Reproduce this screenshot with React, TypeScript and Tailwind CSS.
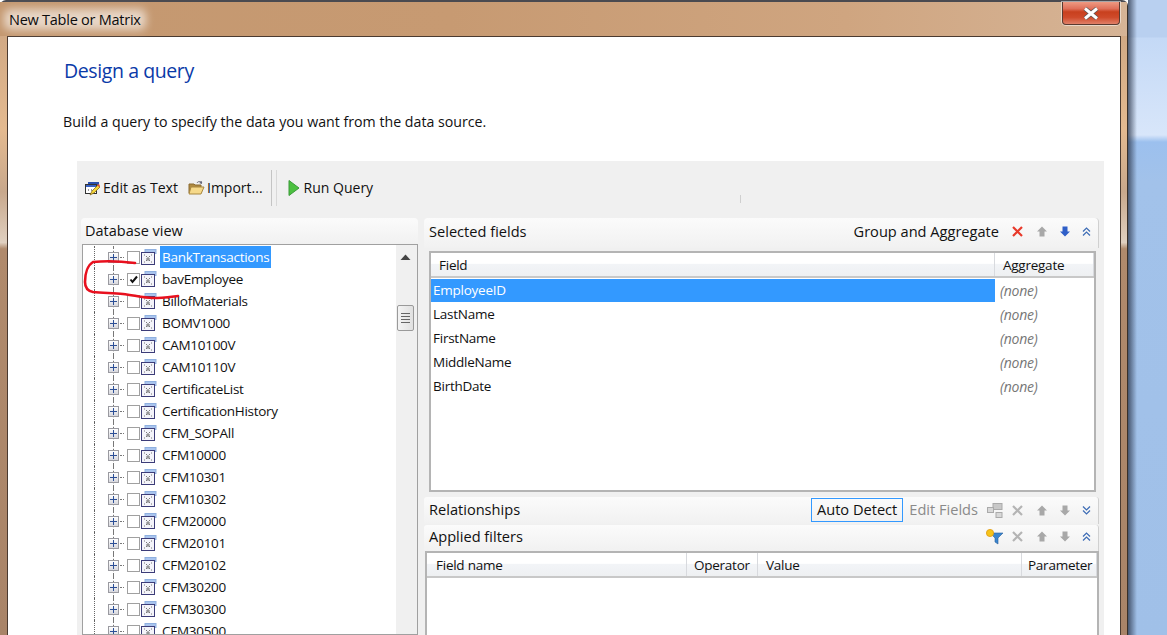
import React from "react";

const names = ["BankTransactions","bavEmployee","BillofMaterials","BOMV1000","CAM10100V","CAM10110V","CertificateList","CertificationHistory","CFM_SOPAll","CFM10000","CFM10301","CFM10302","CFM20000","CFM20101","CFM20102","CFM30200","CFM30300","CFM30500"];
const fields = ["EmployeeID","LastName","FirstName","MiddleName","BirthDate"];

function TableIcon() {
  return (
    <svg width="16" height="16" viewBox="0 0 16 16" className="shrink-0">
      <rect x="4" y="0.5" width="11" height="4" fill="#a9c4ee" stroke="#8fb0e0" />
      <rect x="0.5" y="3.5" width="13" height="12" fill="#f4f4fa" stroke="#3c3c78" />
      <path d="M3 6h1M5 7l1 1M9 7l-1 1M10 6h1M3 13h1M5 12l1-1M9 12l-1-1M10 13h1M6 9h2v2H6z" stroke="#777" strokeWidth="1" fill="none" />
    </svg>
  );
}

function Plus() {
  return (
    <div className="relative z-10 flex h-[11px] w-[11px] items-center justify-center border border-[#9a9aa0] bg-[linear-gradient(#ffffff,#d8d8de)]">
      <svg width="9" height="9" viewBox="0 0 9 9"><path d="M1 4.5h7M4.5 1v7" stroke="#2c4f96" strokeWidth="1" /></svg>
    </div>
  );
}

function TreeRow({ name, i }: { name: string; i: number }) {
  return (
    <div className="flex h-[22px] items-center">
      <div className="h-full w-[12px] shrink-0 border-r border-dotted border-[#666]" />
      <div className="relative flex h-full w-[13px] shrink-0" />
      <div className="relative flex h-full w-[11px] shrink-0 items-center">
        <div className="absolute left-[5px] top-0 h-full border-l border-dashed border-[#777]" />
        <Plus />
      </div>
      <div className="ml-[1px] mr-[3px] w-[4px] shrink-0 border-t border-dotted border-[#777]" />
      <div className="flex h-[13px] w-[13px] shrink-0 items-center justify-center border border-[#a0a0a0] bg-white">
        {i === 1 && (
          <svg width="11" height="11" viewBox="0 0 11 11"><path d="M2.5 5.5l2 2.5 4.5-5.5" stroke="#111" strokeWidth="2" fill="none" /></svg>
        )}
      </div>
      <div className="ml-[1px]"><TableIcon /></div>
      <div className={"ml-[3px] flex h-[22px] items-center px-[2px] text-[13.5px] tracking-[-0.28px] " + (i === 0 ? "bg-[#3399ff] text-white" : "text-[#111]")}>{name}</div>
    </div>
  );
}

function Arrow({ dir, color }: { dir: "up" | "down"; color: string }) {
  return (
    <svg width="10" height="11" viewBox="0 0 10 11" className={dir === "down" ? "rotate-180" : ""}>
      <path d="M5 0.5L10 5.5H7.5V10.5H2.5V5.5H0z" fill={color} />
    </svg>
  );
}
function Cross({ color }: { color: string }) {
  return (
    <svg width="11" height="11" viewBox="0 0 11 11"><path d="M1 1l9 9M10 1l-9 9" stroke={color} strokeWidth="2.2" /></svg>
  );
}
function Chevrons({ up }: { up: boolean }) {
  return (
    <svg width="9" height="9" viewBox="0 0 9 9" className={up ? "" : "rotate-180"}>
      <path d="M1 4.5l3.5-3.5 3.5 3.5M1 8.5L4.5 5 8 8.5" stroke="#3d6cb5" strokeWidth="1.2" fill="none" />
    </svg>
  );
}
function ArrowSet({ up, down, chevUp, cross }: { up: string; down: string; chevUp: boolean; cross: string }) {
  return (
    <div className="flex items-center">
      <div className="flex w-[13px] justify-center"><Cross color={cross} /></div>
      <div className="ml-[11px] flex w-[13px] justify-center"><Arrow dir="up" color={up} /></div>
      <div className="ml-[10px] flex w-[13px] justify-center"><Arrow dir="down" color={down} /></div>
      <div className="ml-[9px] flex w-[13px] justify-center"><Chevrons up={chevUp} /></div>
    </div>
  );
}

const headerBg = "bg-[linear-gradient(#fbfbfb,#f1f1f1)]";
const colHead = "flex h-full items-center pt-[1px] bg-[linear-gradient(#ffffff_45%,#f2f4f7_50%,#eef0f2)] border-r border-[#d8dade] text-[13.5px] tracking-[-0.25px]";

export default function App() {
  return (
    <div className="flex h-[635px] w-[1167px] overflow-hidden font-['Open_Sans','Noto_Sans',sans-serif] text-[14px] text-[#111]">
      <div className="flex h-full w-[1128px] shrink-0 flex-col rounded-t-[6px] border-r border-t-2 border-[#3a3028] border-t-[#4a4a50] bg-[linear-gradient(#c69a72,#d2aa85_6%,#e4ba90_20%,#c8a88c_30%,#e0d0c0_38%,#b08a6c_39%,#a98468)]">
        {/* title bar */}
        <div className="flex h-[34px] shrink-0 items-start justify-between bg-[linear-gradient(90deg,#c49870,#c79a72_40%,#cfa580_75%,#d6b496)] pr-[7px]">
          <div className="relative ml-[9px] mt-[8px] flex h-[19px] items-center text-[14.5px] tracking-[-0.25px] text-[#0c0c0c]">
            <div className="absolute -inset-x-[5px] -inset-y-[1px] rounded-[6px] bg-white/60 blur-[4px]" />
            <span className="relative">New Table or Matrix</span>
          </div>
          <div className="flex h-[23px] w-[58px] items-center justify-center rounded-b-[4px] border border-t-0 border-[#5a3a30] bg-[linear-gradient(#ee9a82,#e0705a_30%,#c8401e_45%,#cf4a2a_70%,#e08068)] shadow-[0_0_0_1px_rgba(255,255,255,0.5)]">
            <svg width="16" height="13" viewBox="0 0 16 13"><path d="M2 1.5l12 10M14 1.5l-12 10" stroke="#555" strokeWidth="4.4" /><path d="M2 1.5l12 10M14 1.5l-12 10" stroke="#fff" strokeWidth="3" /></svg>
          </div>
        </div>
        {/* white client */}
        <div className="mx-[6px] ml-[7px] flex min-h-0 flex-1 flex-col border-l border-t border-r border-[#4a3a30] bg-white">
          <h1 className="ml-[56px] mt-[20px] text-[19.5px] font-normal leading-[28px] tracking-[-0.4px] text-[#0a3aa8]">Design a query</h1>
          <p className="ml-[55px] mt-[27px] text-[14.2px] leading-[20px]">Build a query to specify the data you want from the data source.</p>
          {/* gray panel */}
          <div className="ml-[69px] mr-[16px] mt-[29px] flex min-h-0 flex-1 flex-col bg-[#f0f0f0] pl-[4px] pr-[5px]">
            {/* toolbar */}
            <div className="flex h-[54px] shrink-0 items-center pl-[4px]">
              <svg width="16" height="16" viewBox="0 0 16 16" className="mt-[1px]">
                <rect x="3" y="1" width="11" height="3" fill="#2a4fae" />
                <rect x="0.5" y="3.5" width="11" height="9" fill="#fff" stroke="#333" />
                <rect x="1" y="4" width="10" height="2" fill="#3a62c4" />
                <path d="M3 9h1M6 9h1" stroke="#333" />
                <path d="M5 14l2-4 6-6 2 2-6 6z" fill="#f4d73a" stroke="#7a5a10" strokeWidth="0.7" />
                <path d="M12 4l2-1 1 2-1 1z" fill="#e0503a" />
              </svg>
              <span className="ml-[2px] pb-[1px] text-[14.1px]">Edit as Text</span>
              <svg width="17" height="15" viewBox="0 0 17 15" className="ml-[10px] -mt-[2px]">
                <path d="M1 4h5l1 1h6v8H1z" fill="#b08a40" stroke="#8a6a30" />
                <path d="M3 7h13l-3 7H1z" fill="#f6d98a" stroke="#a98840" />
                <path d="M9 3c1-2 4-2 5 0" stroke="#667" fill="none" />
                <path d="M14 1l0 3-3-1z" fill="#667" />
              </svg>
              <span className="ml-[2px] pb-[1px]">Import...</span>
              <div className="ml-[8px] flex h-[36px] gap-[4px]">
                <div className="w-[1px] bg-[#c4c4c4]" />
                <div className="w-[1px] bg-[#d8d8d8]" />
              </div>
              <svg width="12" height="16" viewBox="0 0 12 16" className="ml-[11px] -mt-[1px]">
                <path d="M1 0.5L11 8 1 15.5z" fill="#4cc040" stroke="#3a9a38" />
              </svg>
              <span className="ml-[4px] pb-[1px]">Run Query</span>
              <div className="ml-[367px] mt-[22px] h-[8px] w-[1px] bg-[#cfcfcf]" />
            </div>
            {/* columns */}
            <div className="mt-[3px] flex min-h-0 flex-1 gap-[6px]">
              {/* left column */}
              <div className="flex w-[337px] shrink-0 flex-col">
                <div className={"flex h-[26px] shrink-0 items-center rounded-t-[4px] pl-[4px] text-[14.5px] " + headerBg}>Database view</div>
                <div className="relative ml-[1px] flex min-h-0 flex-1 overflow-hidden border border-[#a0a0a0] bg-white">
                  <div className="min-w-0 flex-1 pt-[1px]">
                    {names.map((n, i) => <TreeRow key={n} name={n} i={i} />)}
                  </div>
                  {/* scrollbar */}
                  <div className="flex w-[21px] shrink-0 flex-col items-center bg-[#f0f0f0] pr-[3px]">
                    <svg width="11" height="6" viewBox="0 0 11 6" className="mt-[9px]"><path d="M0.5 6L5.5 0.5 10.5 6z" fill="#444" /></svg>
                    <div className="mt-[45px] flex h-[26px] w-[17px] shrink-0 flex-col items-center justify-center gap-[2px] rounded-[2px] border border-[#9a9a9a] bg-[linear-gradient(90deg,#f4f4f4,#e0e0e0)]">
                      <div className="h-[1px] w-[9px] bg-[#666]" />
                      <div className="h-[1px] w-[9px] bg-[#666]" />
                      <div className="h-[1px] w-[9px] bg-[#666]" />
                      <div className="h-[1px] w-[9px] bg-[#666]" />
                    </div>
                  </div>
                  {/* hand-drawn annotation */}
                  <svg width="110" height="50" viewBox="0 0 110 50" className="pointer-events-none absolute left-[0px] top-[14px] z-20">
                    <path d="M52 4C36 2 20 2 10 3 5 6 2 14 2 23c0 6 3 9 8 10 10 1 20 1 30 2 10 1 20 4 30 4 9 0 16-1 25-2" stroke="#e8101e" strokeWidth="2.6" fill="none" strokeLinecap="round" />
                  </svg>
                </div>
              </div>
              {/* right column */}
              <div className="flex min-w-0 flex-1 flex-col">
                <div className={"flex h-[30px] shrink-0 items-center justify-between rounded-t-[4px] border-r border-[#d0d0d0] pb-[3px] pl-[5px] pr-[5px] text-[14.6px] " + headerBg}>
                  <span>Selected fields</span>
                  <div className="flex items-center">
                    <span className="mr-[12px]">Group and Aggregate</span>
                    <ArrowSet cross="#e8392a" up="#a8a8a8" down="#2f5fc8" chevUp={true} />
                  </div>
                </div>
                <div className="mx-[5px] mt-[3px] mr-[3px] flex h-[241px] shrink-0 flex-col border-2 border-[#b4b4b4] bg-white">
                  <div className="flex h-[25px] shrink-0 border-b-2 border-[#c8c8c8]">
                    <div className={colHead + " w-[564px] pl-[8px]"}>Field</div>
                    <div className={colHead + " flex-1 pl-[8px]"}>Aggregate</div>
                  </div>
                  {fields.map((f, i) => (
                    <div key={f} className="flex h-[24px] shrink-0 items-center pt-[1px] text-[13.5px] tracking-[-0.25px]">
                      <div className={"flex h-full w-[564px] items-center pl-[2px] " + (i === 0 ? "bg-[#3399ff] text-white" : "")}>{f}</div>
                      <div className="pl-[5px] text-[14px] italic text-[#777]">(none)</div>
                    </div>
                  ))}
                </div>
                <div className={"mt-[5px] flex h-[27px] shrink-0 items-center justify-between rounded-t-[3px] border-r border-[#d0d0d0] pb-[1px] pl-[5px] pr-[5px] text-[14.6px] " + headerBg}>
                  <span>Relationships</span>
                  <div className="flex items-center">
                    <div className="mr-[6px] flex h-[24px] items-center border border-[#3399ff] px-[5px]">Auto Detect</div>
                    <span className="text-[#8a8a8a]">Edit Fields</span>
                    <svg width="16" height="15" viewBox="0 0 16 15" className="ml-[9px] mr-[8px]">
                      <rect x="6" y="0.5" width="9" height="6" fill="#c8c8c8" stroke="#aaa" />
                      <rect x="0.5" y="4.5" width="6" height="5" fill="#d8d8d8" stroke="#aaa" />
                      <rect x="9" y="9.5" width="6" height="5" fill="#d8d8d8" stroke="#aaa" />
                    </svg>
                    <ArrowSet cross="#b4b4b4" up="#a8a8a8" down="#a8a8a8" chevUp={false} />
                  </div>
                </div>
                <div className={"mt-[1px] flex h-[26px] shrink-0 items-center justify-between rounded-t-[3px] border-r border-[#d0d0d0] pb-[3px] pl-[5px] pr-[5px] text-[14.6px] " + headerBg}>
                  <span>Applied filters</span>
                  <div className="flex items-center">
                    <svg width="17" height="16" viewBox="0 0 17 16" className="mr-[8px]">
                      <path d="M4 4h13l-5 5v6l-3-2V9z" fill="#3a86d0" stroke="#2a5f9a" strokeWidth="0.6" />
                      <circle cx="4" cy="4" r="3.6" fill="#f6c41a" stroke="#e09a10" strokeWidth="0.8" />
                    </svg>
                    <ArrowSet cross="#b4b4b4" up="#a8a8a8" down="#a8a8a8" chevUp={true} />
                  </div>
                </div>
                <div className="ml-[1px] flex min-h-0 flex-1 flex-col border-2 border-b-0 border-[#b4b4b4] bg-white">
                  <div className="flex h-[25px] shrink-0 border-b-2 border-[#c8c8c8]">
                    <div className={colHead + " w-[260px] pl-[9px]"}>Field name</div>
                    <div className={colHead + " w-[71px] pl-[7px]"}>Operator</div>
                    <div className={colHead + " w-[264px] pl-[8px]"}>Value</div>
                    <div className={colHead + " flex-1 pl-[6px]"}>Parameter</div>
                  </div>
                </div>
              </div>
            </div>
          </div>
        </div>
      </div>
      {/* desktop behind */}
      <div className="relative min-w-0 flex-1 bg-[linear-gradient(#b9d0f0_0,#b9d0f0_37px,#c4d9f6_38px,#d8e6fa_135px,#9cc0ee_142px,#a2c2ea_181px,#a0c0e8_635px)]">
        <div className="absolute inset-y-0 left-0 w-[9px] bg-[linear-gradient(90deg,rgba(40,50,70,0.75),rgba(40,50,70,0))]" />
      </div>
    </div>
  );
}
